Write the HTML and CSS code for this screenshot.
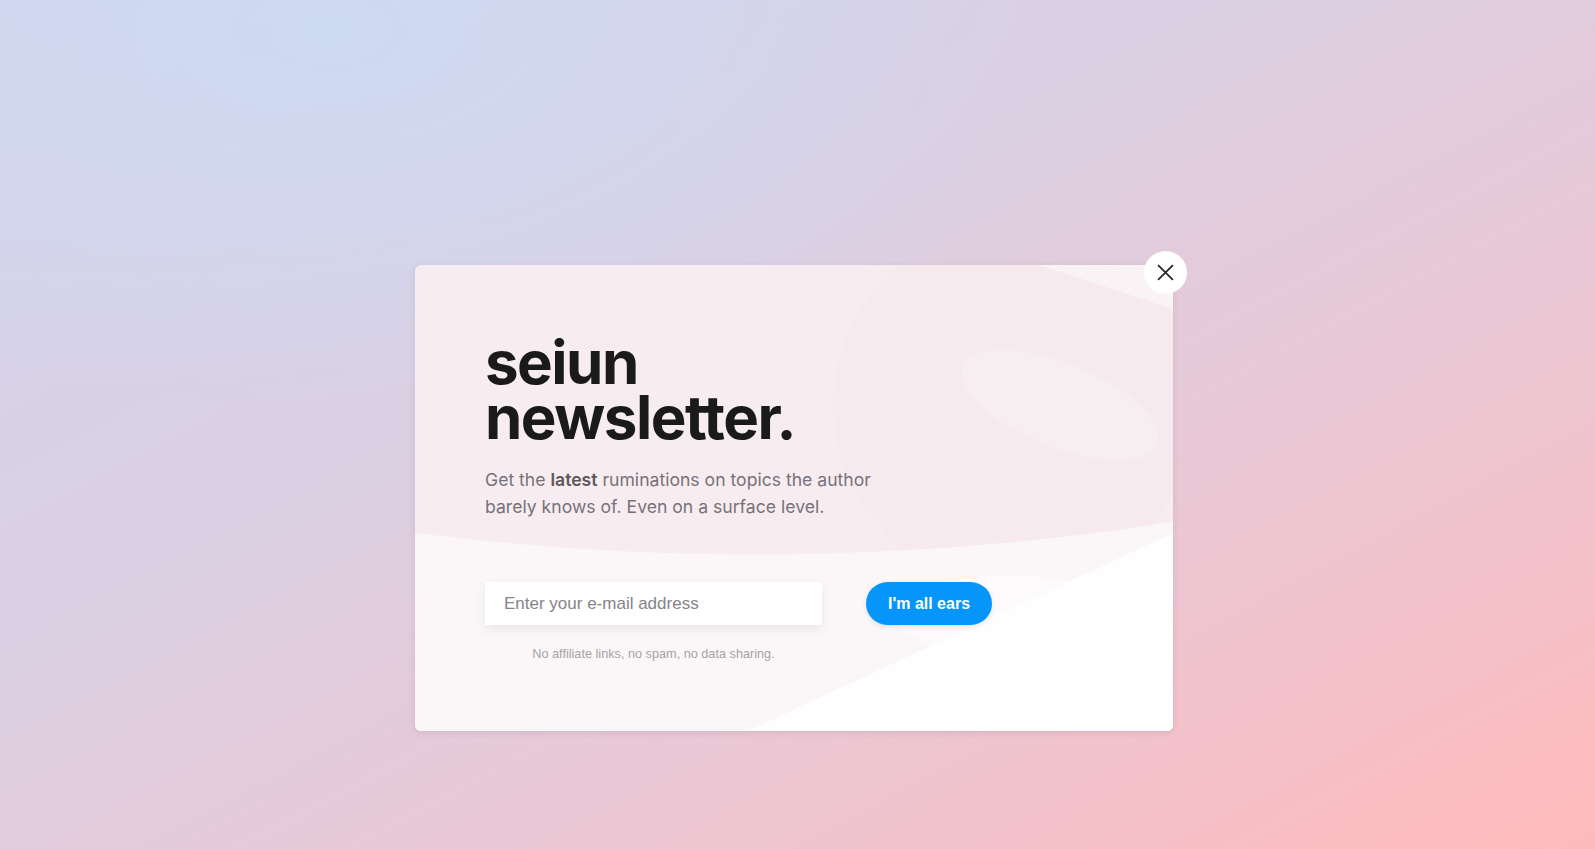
FILE: index.html
```html
<!DOCTYPE html>
<html lang="en">
<head>
<meta charset="utf-8">
<title>seiun newsletter</title>
<link rel="stylesheet" href="styles.css">
</head>
<body>
<div class="page">
  <div class="modal">
    <svg class="modal-bg" viewBox="0 0 758 466" preserveAspectRatio="none" aria-hidden="true">
      <rect width="758" height="466" fill="#f7edf0"/>
      <circle cx="600" cy="140" r="182" fill="#f6eaee"/>
      <ellipse cx="645" cy="140" rx="105" ry="42" transform="rotate(22 645 140)" fill="#f7eef1"/>
      <polygon points="625,0 758,0 758,44" fill="#faf3f5"/>
      <path d="M0,268 Q380,316 758,257 L758,466 L0,466 Z" fill="#fbf7f8"/>
      <ellipse cx="592" cy="350" rx="112" ry="40" fill="#fdfafb"/>
      <polygon points="333,466 758,268 758,466" fill="#fefefe"/>
    </svg>
    <button class="close" type="button" aria-label="Close">
      <svg viewBox="0 0 16 16" width="17" height="17"><path d="M1 1L15 15M15 1L1 15" stroke="#222" stroke-width="1.6" fill="none"/></svg>
    </button>
    <div class="content">
      <h1 class="title"><span class="title-line">seiun</span><span class="title-line">newsletter.</span></h1>
      <p class="lead">Get the <strong>latest</strong> ruminations on topics the author<br>barely knows of. Even on a surface level.</p>
      <div class="form-row">
        <div class="field">
          <input class="email" type="email" placeholder="Enter your e-mail address">
          <p class="note">No affiliate links, no spam, no data sharing.</p>
        </div>
        <button class="submit" type="button">I'm all ears</button>
      </div>
    </div>
  </div>
</div>
</body>
</html>
```

FILE: styles.css
```css
html, body {
  margin: 0;
  padding: 0;
  height: 100%;
}
body {
  font-family: "Liberation Sans", Arial, sans-serif;
  background:
    radial-gradient(ellipse 700px 380px at 330px 30px, rgba(205,219,243,0.9) 0%, rgba(205,219,243,0) 100%),
    linear-gradient(to bottom right, #d2d5ed 0%, #dbcfe2 40%, #ecc6d2 70%, #ffbabb 100%);
  overflow: hidden;
}
.page {
  height: 100%;
  display: flex;
  justify-content: center;
  align-items: flex-start;
  padding-top: 265px;
  padding-right: 7px;
  box-sizing: border-box;
}
.modal {
  position: relative;
  width: 758px;
  height: 466px;
  border-radius: 6px;
  box-shadow: 0 2px 6px rgba(80, 60, 90, 0.12);
}
.modal-bg {
  position: absolute;
  inset: 0;
  width: 100%;
  height: 100%;
  border-radius: 6px;
  display: block;
}
.close {
  position: absolute;
  top: -14px;
  right: -14px;
  width: 43px;
  height: 43px;
  border-radius: 50%;
  border: none;
  background: #fff;
  padding: 0;
  display: flex;
  align-items: center;
  justify-content: center;
  cursor: pointer;
  z-index: 2;
}
.content {
  position: relative;
  padding: 70px 70px 0;
}
.title {
  margin: 0;
  font-family: Inter, "Liberation Sans", sans-serif;
  font-weight: 700;
  font-size: 60px;
  line-height: 55px;
  letter-spacing: -1.5px;
  font-variant-ligatures: none;
  font-feature-settings: "liga" 0, "calt" 0;
  color: #1a1a1a;
}
.title-line {
  display: block;
  height: 55px;
}
.lead {
  margin: 21px 0 0;
  font-family: Inter, "Liberation Sans", sans-serif;
  font-size: 17.6px;
  line-height: 27px;
  color: #77717a;
}
.lead strong {
  font-weight: 600;
  color: #5c575c;
}
.form-row {
  margin-top: 62px;
  display: flex;
  align-items: flex-start;
  gap: 44px;
}
.field {
  display: flex;
  flex-direction: column;
  align-items: center;
  width: 337px;
}
.email {
  width: 337px;
  height: 43px;
  box-sizing: border-box;
  border: none;
  outline: none;
  background: #fff;
  padding: 0 19px;
  font-family: "Liberation Sans", Arial, sans-serif;
  font-size: 17px;
  font-weight: 500;
  color: #333;
  box-shadow: 0 5px 10px rgba(90, 70, 80, 0.09);
}
.email::placeholder {
  color: #86838a;
}
.note {
  margin: 20px 0 0;
  font-size: 12.7px;
  line-height: 18px;
  color: #a6a2a6;
}
.submit {
  width: 126px;
  height: 43px;
  border: none;
  border-radius: 22px;
  background: #0695fb;
  color: #fff;
  font-family: "Liberation Sans", Arial, sans-serif;
  font-weight: 700;
  font-size: 16px;
  box-shadow: 0 2px 4px rgba(0, 60, 120, 0.12);
  cursor: pointer;
}
```
